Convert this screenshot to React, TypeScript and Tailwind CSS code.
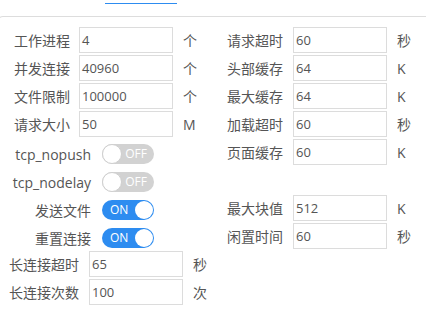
import React from 'react'

const font = { fontFamily: '"Open Sans", "Noto Sans CJK SC", sans-serif' }

function Input({ value }: { value: string }) {
  return (
    <div className="w-[94px] h-[26px] border border-[#dcdcdc] bg-white flex items-center pl-[2px] text-[13px] text-[#555] leading-none">
      {value}
    </div>
  )
}

function Switch({ on }: { on: boolean }) {
  return on ? (
    <div className="w-[52px] h-[20px] rounded-full bg-[#2d8cf0] flex items-center justify-between pl-[8px] pr-[1px]">
      <span className="text-[12px] text-white leading-none">ON</span>
      <span className="w-[18px] h-[18px] rounded-full bg-white" />
    </div>
  ) : (
    <div className="w-[52px] h-[20px] rounded-full bg-[#d2d2d2] flex items-center justify-between pl-0 pr-[7px]">
      <span className="w-[20px] h-[20px] rounded-full bg-white border border-[#cfcfcf]" />
      <span className="text-[12px] text-white leading-none">OFF</span>
    </div>
  )
}

// 左列: 输入行
function RowA({ label, value, unit }: { label: string; value: string; unit: string }) {
  return (
    <div className="h-[26px] mb-[2px] flex items-center">
      <div className="w-[70px] text-right text-[14px] text-[#555]">{label}</div>
      <div className="ml-[9px]"><Input value={value} /></div>
      <div className="ml-[10px] text-[14px] text-[#555]">{unit}</div>
    </div>
  )
}

// 左列: 开关行
function RowB({ label, on }: { label: string; on: boolean }) {
  return (
    <div className="h-[26px] mb-[2px] flex items-center">
      <div className="mt-[4px] flex items-center">
        <div className="w-[91px] text-right text-[14px] text-[#555]">{label}</div>
        <div className="ml-[11px]"><Switch on={on} /></div>
      </div>
    </div>
  )
}

function RowC({ label, value, unit }: { label: string; value: string; unit: string }) {
  return (
    <div className="h-[26px] mb-[2px] flex items-center">
      <div className="w-[79px] text-right text-[14px] text-[#555]">{label}</div>
      <div className="ml-[10px]"><Input value={value} /></div>
      <div className="ml-[10px] text-[14px] text-[#555]">{unit}</div>
    </div>
  )
}

function RowR({ label, value, unit }: { label: string; value: string; unit: string }) {
  return (
    <div className="h-[26px] mb-[2px] flex items-center">
      <div className="w-[73px] text-right text-[14px] text-[#555]">{label}</div>
      <div className="ml-[10px]"><Input value={value} /></div>
      <div className="ml-[10px] text-[14px] text-[#555]">{unit}</div>
    </div>
  )
}

export default function App() {
  return (
    <div className="w-[427px] h-[320px] bg-white overflow-hidden" style={font}>
      <div className="h-[16px] pt-[3px]">
        <div className="ml-[105px] w-[72px] h-[1px] bg-[#2d8cf0]" />
      </div>
      <div className="ml-[-3px] mr-[1px] border-t border-l border-[#dddddd] rounded-tl-[6px] pl-[2px] pt-[10px] h-[304px]">
        <div className="flex">
          <div className="w-[210px]">
            <RowA label="工作进程" value="4" unit="个" />
            <RowA label="并发连接" value="40960" unit="个" />
            <RowA label="文件限制" value="100000" unit="个" />
            <RowA label="请求大小" value="50" unit="M" />
            <RowB label="tcp_nopush" on={false} />
            <RowB label="tcp_nodelay" on={false} />
            <RowB label="发送文件" on={true} />
            <RowB label="重置连接" on={true} />
          </div>
          <div>
            <RowR label="请求超时" value="60" unit="秒" />
            <RowR label="头部缓存" value="64" unit="K" />
            <RowR label="最大缓存" value="64" unit="K" />
            <RowR label="加载超时" value="60" unit="秒" />
            <RowR label="页面缓存" value="60" unit="K" />
            <div className="h-[26px] mb-[2px]" />
            <RowR label="最大块值" value="512" unit="K" />
            <RowR label="闲置时间" value="60" unit="秒" />
          </div>
        </div>
        <RowC label="长连接超时" value="65" unit="秒" />
        <RowC label="长连接次数" value="100" unit="次" />
      </div>
    </div>
  )
}
